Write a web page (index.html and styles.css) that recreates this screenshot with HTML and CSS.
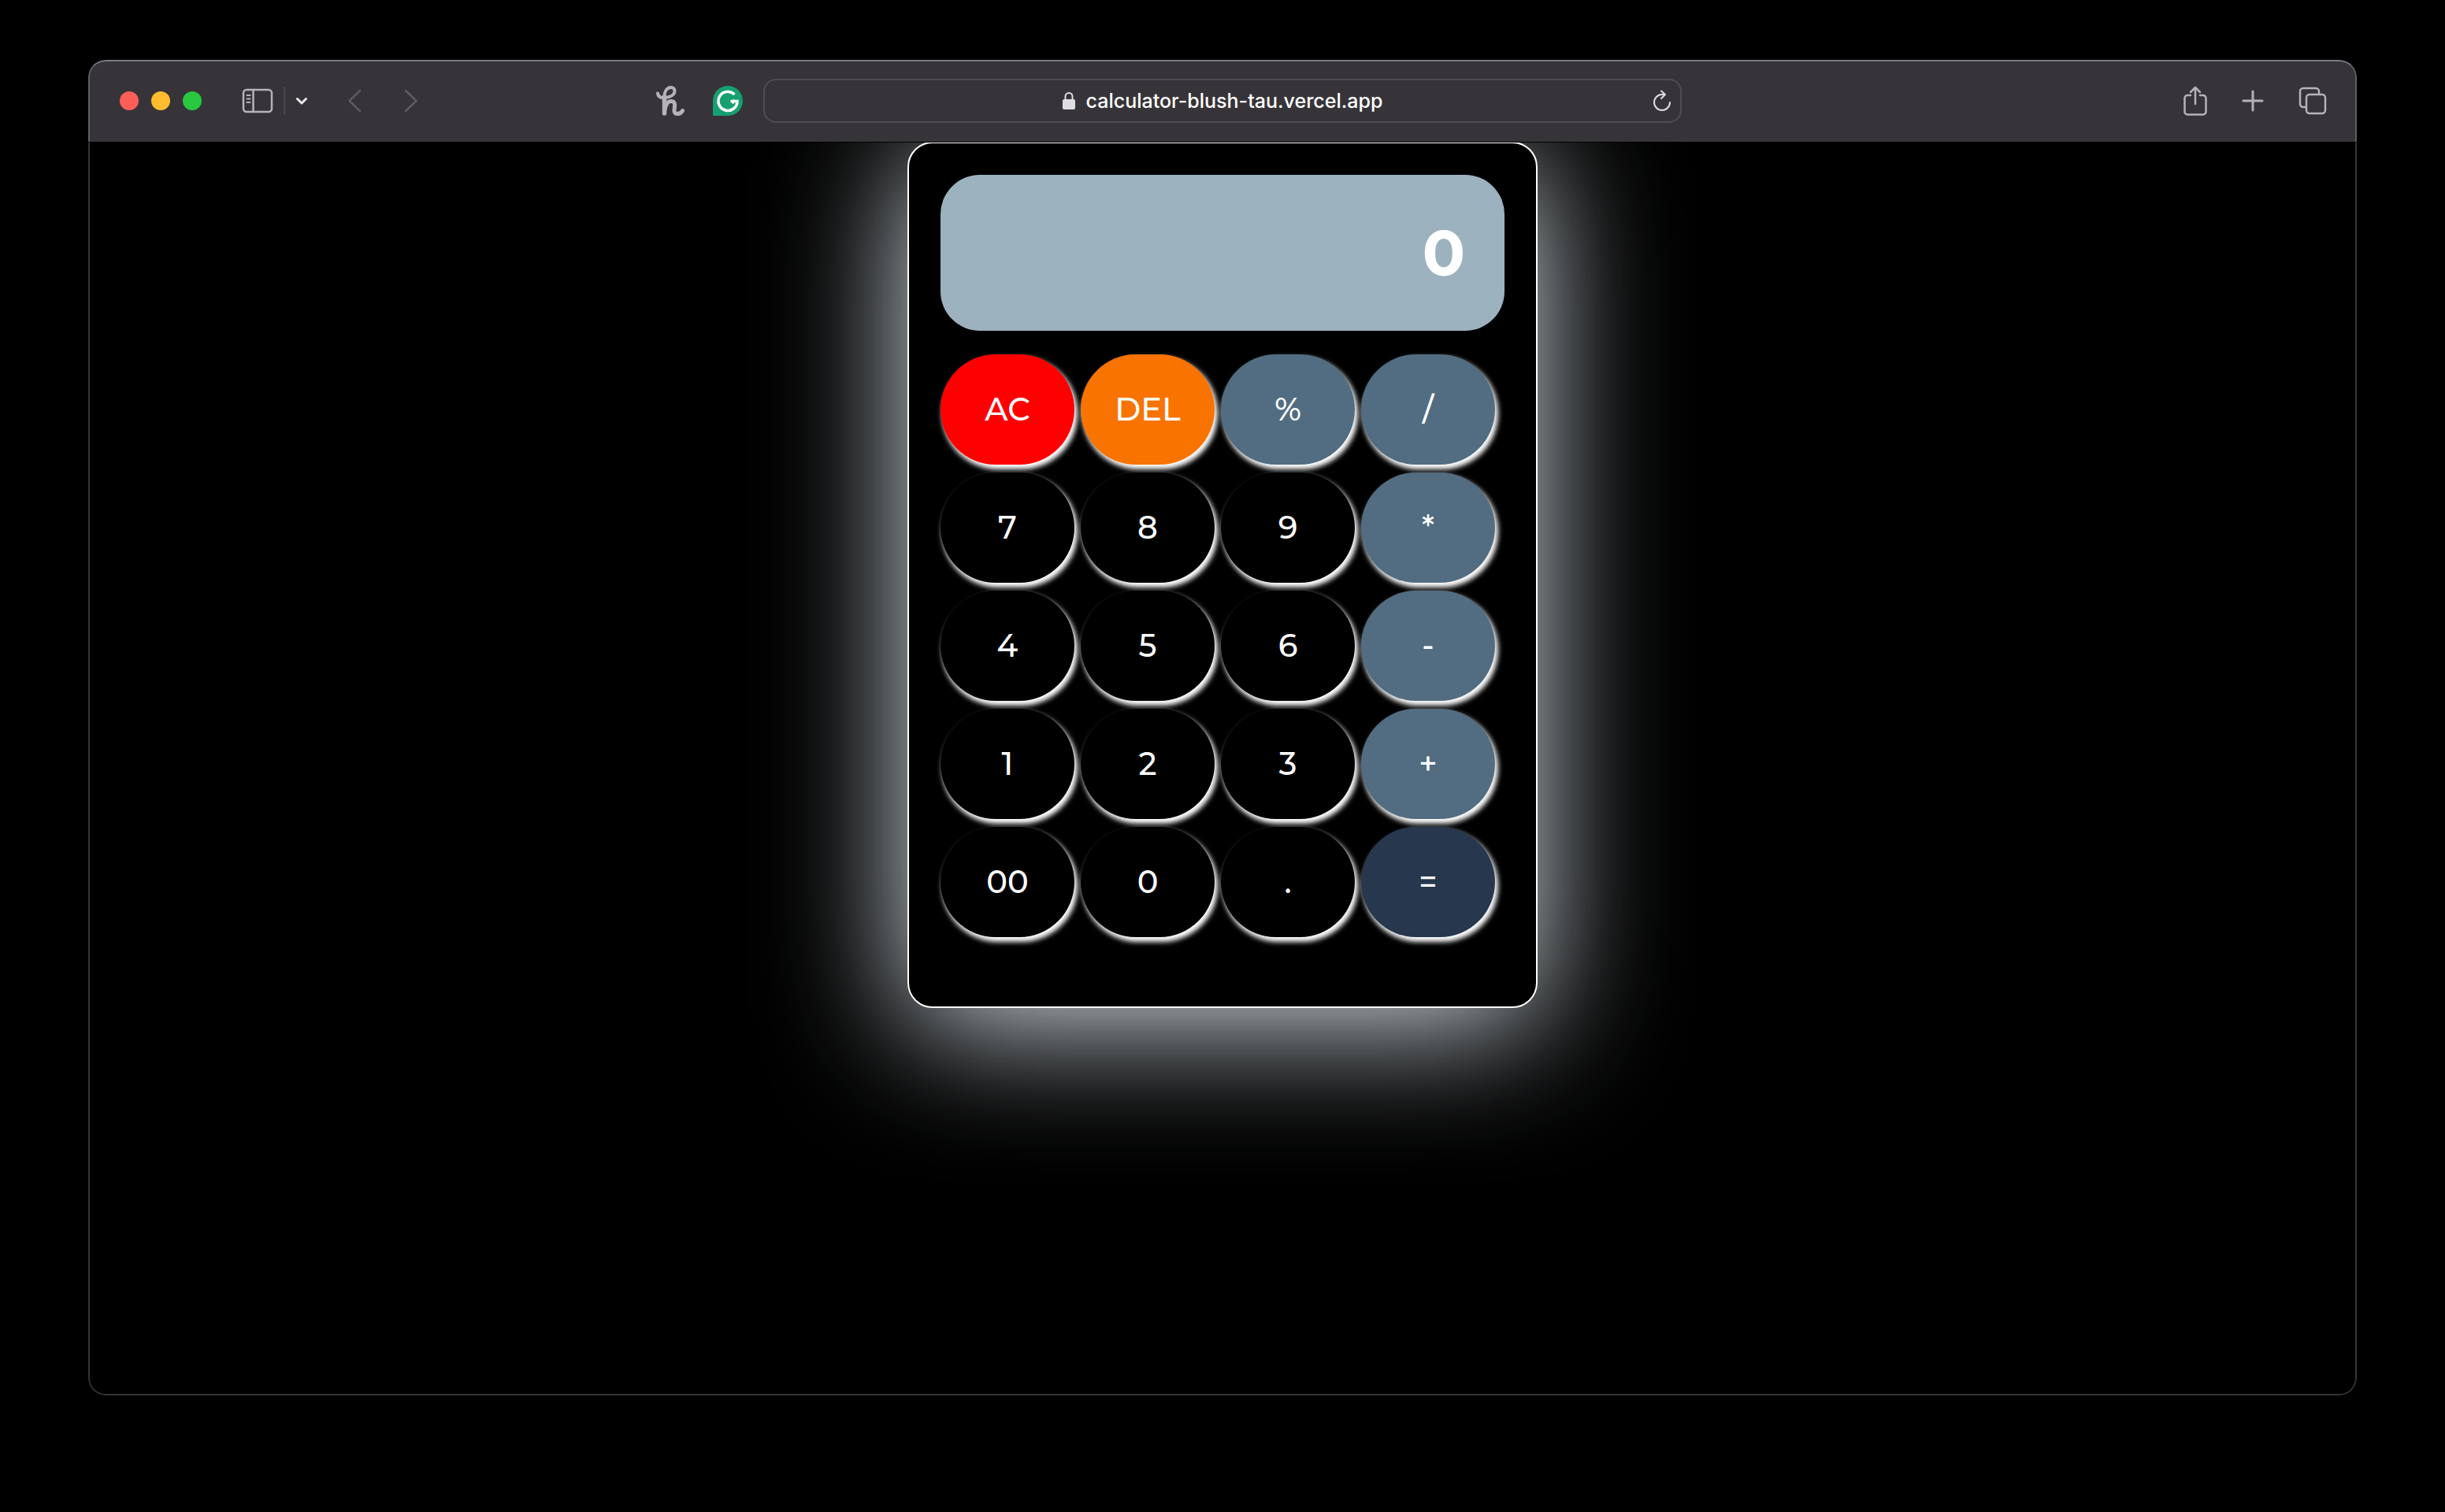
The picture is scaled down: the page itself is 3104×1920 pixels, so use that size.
FILE: index.html
```html
<!DOCTYPE html>
<html lang="en">
<head>
<meta charset="utf-8">
<meta name="viewport" content="width=device-width, initial-scale=1">
<title>Calculator</title>
<link rel="stylesheet" href="styles.css">
</head>
<body>
<div class="window">
  <header class="toolbar">
    <div class="toolbar-side">
      <div class="lights">
        <button class="light light-close" aria-label="Close"></button>
        <button class="light light-min" aria-label="Minimize"></button>
        <button class="light light-full" aria-label="Full screen"></button>
      </div>
      <div class="sidebar-group">
        <button class="tool" aria-label="Show sidebar">
          <svg width="40" height="32" viewBox="0 0 40 32" fill="none" stroke="currentColor" stroke-width="2.500"><rect x="2" y="2" width="36" height="28" rx="4"/><path d="M14.500 2v28"/><path d="M6.500 9h4M6.500 13.500h4M6.500 18h4" stroke-width="2" stroke-linecap="round"/></svg>
        </button>
        <span class="divider"></span>
        <button class="tool tool-bright" aria-label="Tab groups">
          <svg width="16" height="10" viewBox="0 0 16 10" fill="none" stroke="currentColor" stroke-width="3" stroke-linecap="round" stroke-linejoin="round"><path d="M2.500 2.500 8 8l5.500-5.500"/></svg>
        </button>
      </div>
      <div class="history">
        <button class="tool tool-dim" aria-label="Back">
          <svg width="18" height="30" viewBox="0 0 18 30" fill="none" stroke="currentColor" stroke-width="2.500" stroke-linecap="round" stroke-linejoin="round"><path d="M16 2 2.500 15 16 28"/></svg>
        </button>
        <button class="tool tool-dim" aria-label="Forward">
          <svg width="18" height="30" viewBox="0 0 18 30" fill="none" stroke="currentColor" stroke-width="2.500" stroke-linecap="round" stroke-linejoin="round"><path d="M2 2l13.500 13L2 28"/></svg>
        </button>
      </div>
      <div class="extensions">
        <button class="tool" aria-label="Honey">
          <svg width="36" height="38" viewBox="0 0 36 38" fill="none" stroke="currentColor" stroke-linecap="round" stroke-linejoin="round"><path d="M2 9.500C2.500 14 6 15.500 11 15c7-.500 12.500-3.500 12.500-8.500 0-3-2-4.500-4.500-4.500-5.500 0-8.500 5-8.500 12v20" stroke-width="4"/><path d="M10.500 14v21" stroke-width="5.500"/><path d="M11 31c1-7 4-11.500 8-11.500s5 3 4.500 6.500l-.500 5c-.500 5.500 7 6.500 10.500.500" stroke-width="5"/></svg>
        </button>
        <button class="tool" aria-label="Grammarly">
          <svg width="38" height="38" viewBox="0 0 38 38" fill="none"><path d="M0 38V19a19 19 0 1 1 19 19Z" fill="#15a070"/><path d="M27.500 11A12 12 0 1 0 31 19.500H22.500M28 18l-3.500 4" stroke="#fff" stroke-width="3.500"/></svg>
        </button>
      </div>
    </div>
    <div class="address">
      <svg class="lock" width="16" height="24" viewBox="0 0 16 24" fill="none"><rect y="10" width="16" height="13" rx="2" fill="#dedde1"/><path d="M3.500 11V6.500a4.500 4.500 0 0 1 9 0V11" stroke="#dedde1" stroke-width="2"/></svg>
      <span class="url">calculator-blush-tau.vercel.app</span>
      <button class="tool reload" aria-label="Reload">
        <svg width="24" height="28" viewBox="0 0 24 28" fill="none" stroke="currentColor" stroke-width="2" stroke-linecap="round" stroke-linejoin="round"><path d="M22 16A10 10 0 1 1 12 6h3"/><path d="m11 1.500 5 4.500-5 5"/></svg>
      </button>
    </div>
    <div class="toolbar-side toolbar-end">
      <button class="tool" aria-label="Share">
        <svg width="30" height="38" viewBox="0 0 30 38" fill="none" stroke="currentColor" stroke-width="2.500" stroke-linecap="round" stroke-linejoin="round"><path d="M9 12H5a3.500 3.500 0 0 0-3.500 3.500V33A3.500 3.500 0 0 0 5 36.500h20a3.500 3.500 0 0 0 3.500-3.500V15.500A3.500 3.500 0 0 0 25 12h-4"/><path d="M15 23V2M9 8l6-6 6 6"/></svg>
      </button>
      <button class="tool" aria-label="New tab">
        <svg width="28" height="28" viewBox="0 0 28 28" fill="none" stroke="currentColor" stroke-width="3" stroke-linecap="round"><path d="M14 2v24M2 14h24"/></svg>
      </button>
      <button class="tool" aria-label="Tab overview">
        <svg width="36" height="36" viewBox="0 0 36 36" fill="none" stroke="currentColor" stroke-width="2.500"><rect x="10" y="10" width="24" height="24" rx="4"/><path d="M10 26H6a4 4 0 0 1-4-4V6a4 4 0 0 1 4-4h16a4 4 0 0 1 4 4v4"/></svg>
      </button>
    </div>
  </header>
  <main class="page">
    <div class="calculator">
      <output class="display">0</output>
      <div class="keys">
        <button class="key key-clear">AC</button>
        <button class="key key-delete">DEL</button>
        <button class="key key-operator">%</button>
        <button class="key key-operator">/</button>
        <button class="key">7</button>
        <button class="key">8</button>
        <button class="key">9</button>
        <button class="key key-operator">*</button>
        <button class="key">4</button>
        <button class="key">5</button>
        <button class="key">6</button>
        <button class="key key-operator">-</button>
        <button class="key">1</button>
        <button class="key">2</button>
        <button class="key">3</button>
        <button class="key key-operator">+</button>
        <button class="key">00</button>
        <button class="key">0</button>
        <button class="key">.</button>
        <button class="key key-equals">=</button>
      </div>
    </div>
  </main>
</div>
</body>
</html>
```
FILE: styles.css
```css
* {
  box-sizing: border-box;
}

body {
  margin: 0;
  min-height: 100vh;
  padding: 76px 112px 148px;
  display: flex;
  background: #000;
  color: #fff;
  font-family: Montserrat, Inter, sans-serif;
}

button {
  padding: 0;
  border: 0;
  background: none;
  color: inherit;
  font: inherit;
}

.window {
  flex: 1;
  display: flex;
  flex-direction: column;
  border-radius: 22px;
  overflow: hidden;
}

.toolbar {
  display: grid;
  grid-template-columns: 1fr minmax(400px, 1166px) 1fr;
  align-items: center;
  position: relative;
  z-index: 1;
  height: 104px;
  padding-bottom: 2px;
  border: 2px solid #605f63;
  border-top-color: #7b7a7e;
  border-bottom: 0;
  border-radius: 22px 22px 0 0;
  background: #373439;
  box-shadow: 0 1px #000;
}

.toolbar-side {
  display: flex;
  align-items: center;
  padding: 0 26px 0 38px;
}

.toolbar-end {
  justify-content: flex-end;
  gap: 44px;
  padding: 0 36px 0 0;
}

.tool {
  display: flex;
  color: #b5b3b8;
}

.tool-bright {
  color: #e8e7ea;
}

.tool-dim {
  color: #5d5b60;
}

.lights {
  display: flex;
  gap: 16px;
}

.light {
  width: 24px;
  height: 24px;
  border-radius: 50%;
}

.light-close {
  background: #ff5f57;
}

.light-min {
  background: #febc2e;
}

.light-full {
  background: #28c840;
}

.sidebar-group {
  display: flex;
  align-items: center;
  gap: 13px;
  margin-left: 51px;
}

.divider {
  width: 2px;
  height: 36px;
  background: #4a484c;
}

.history {
  display: flex;
  gap: 54px;
  margin-left: 50px;
}

.extensions {
  display: flex;
  align-items: center;
  gap: 36px;
  margin-left: auto;
}

.address {
  display: flex;
  align-items: center;
  justify-content: center;
  gap: 14px;
  position: relative;
  height: 56px;
  border: 2px solid #4e4d51;
  border-radius: 16px;
}

.url {
  font: 500 25px/32px Inter, sans-serif;
}

.reload {
  position: absolute;
  right: 11px;
  color: #dedde1;
}

.page {
  flex: 1;
  display: flex;
  justify-content: center;
  align-items: flex-start;
  overflow: hidden;
  border: 2px solid #343434;
  border-top: 0;
  border-radius: 0 0 22px 22px;
}

.calculator {
  width: 800px;
  padding: 40px 40px 88px;
  border: 2px solid #fff;
  border-radius: 32px;
  background: #000;
  box-shadow: 0 20px 170px #dbe5eb;
}

.display {
  display: flex;
  align-items: center;
  justify-content: flex-end;
  height: 198px;
  padding: 0 50px;
  border-radius: 50px;
  background: #9db2bf;
  font-size: 80px;
  font-weight: 700;
}

.keys {
  display: grid;
  grid-template-columns: repeat(4, 170px);
  gap: 10px 8px;
  margin-top: 30px;
}

.key {
  height: 140px;
  padding-bottom: 2px;
  border-radius: 70px;
  background: #000;
  box-shadow: 3px 5px 6px 1px #fff;
  font-size: 40px;
  font-weight: 500;
}

.key-clear {
  background: #f00;
}

.key-delete {
  background: #f97300;
}

.key-operator {
  background: #526d82;
}

.key-equals {
  background: #27374d;
}
```
